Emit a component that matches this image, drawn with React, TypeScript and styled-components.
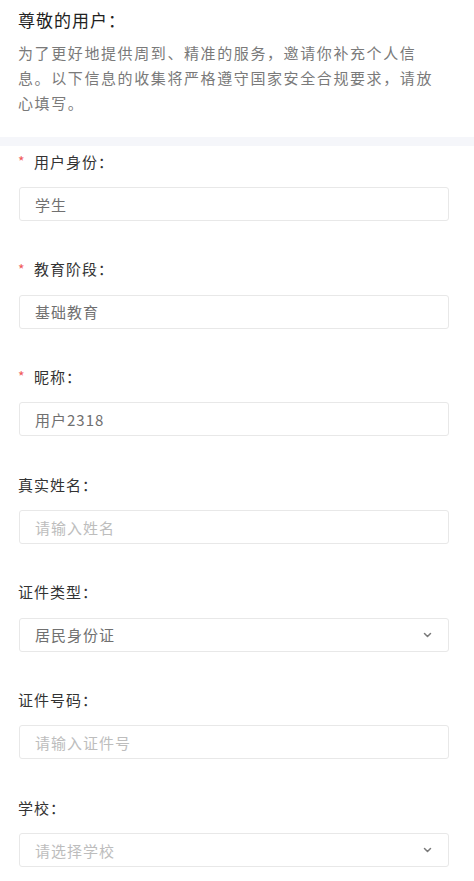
import React from 'react';
import styled, { createGlobalStyle } from 'styled-components';

const GlobalStyle = createGlobalStyle`
  html, body {
    margin: 0;
    padding: 0;
    background: #ffffff;
  }
  body {
    font-family: "Noto Sans CJK SC", "Noto Sans", sans-serif;
    -webkit-font-smoothing: antialiased;
  }
`;

const Page = styled.div`
  width: 474px;
  background: #ffffff;
`;

const Intro = styled.div`
  padding: 8px 32px 22px 18px;
`;

const Title = styled.h2`
  margin: 0 0 8px;
  font-size: 17px;
  font-weight: 400;
  line-height: 24px;
  letter-spacing: 1px;
  color: #222222;
`;

const Notice = styled.p`
  margin: 0;
  font-size: 15px;
  line-height: 25px;
  letter-spacing: 1.6px;
  color: #7a7a7a;
`;

const Divider = styled.div`
  height: 9px;
  background: #f5f6fa;
`;

const Form = styled.form`
  padding: 4px 25px 0 18px;
`;

const Field = styled.div`
  margin-bottom: 36.7px;
`;

const Label = styled.div`
  display: flex;
  align-items: center;
  height: 22px;
  font-size: 15px;
  letter-spacing: 1px;
  color: #333333;
  margin-bottom: 15px;
`;

const Star = styled.span`
  width: 16px;
  font-size: 14px;
  line-height: 22px;
  color: #f05a5a;
`;

const Box = styled.div<{ $placeholder?: boolean }>`
  box-sizing: border-box;
  height: 34px;
  margin-left: 1px;
  display: flex;
  align-items: center;
  justify-content: space-between;
  padding: 0 16px 0 15px;
  border: 1px solid #e8e8e8;
  border-radius: 3px;
  font-size: 15px;
  letter-spacing: 1px;
  color: ${p => (p.$placeholder ? '#bdbdbd' : '#707070')};
`;

const Chevron = () => (
  <svg width="9" height="6" viewBox="0 0 9 6" fill="none">
    <path d="M1.5 1.5 L4.5 4.5 L7.5 1.5" stroke="#7a7a7a" strokeWidth="1.5" strokeLinecap="round" strokeLinejoin="round" />
  </svg>
);

type FieldDef = {
  label: string;
  value: string;
  required?: boolean;
  placeholder?: boolean;
  select?: boolean;
};

const fields: FieldDef[] = [
  { label: '用户身份：', value: '学生', required: true },
  { label: '教育阶段：', value: '基础教育', required: true },
  { label: '昵称：', value: '用户2318', required: true },
  { label: '真实姓名：', value: '请输入姓名', placeholder: true },
  { label: '证件类型：', value: '居民身份证', select: true },
  { label: '证件号码：', value: '请输入证件号', placeholder: true },
  { label: '学校：', value: '请选择学校', placeholder: true, select: true },
];

const App: React.FC = () => (
  <Page>
    <GlobalStyle />
    <Intro>
      <Title>尊敬的用户：</Title>
      <Notice>
        为了更好地提供周到、精准的服务，邀请你补充个人信息。以下信息的收集将严格遵守国家安全合规要求，请放心填写。
      </Notice>
    </Intro>
    <Divider />
    <Form>
      {fields.map(f => (
        <Field key={f.label}>
          <Label>
            {f.required && <Star>*</Star>}
            {f.label}
          </Label>
          <Box $placeholder={f.placeholder}>
            <span>{f.value}</span>
            {f.select && <Chevron />}
          </Box>
        </Field>
      ))}
    </Form>
  </Page>
);

export default App;
